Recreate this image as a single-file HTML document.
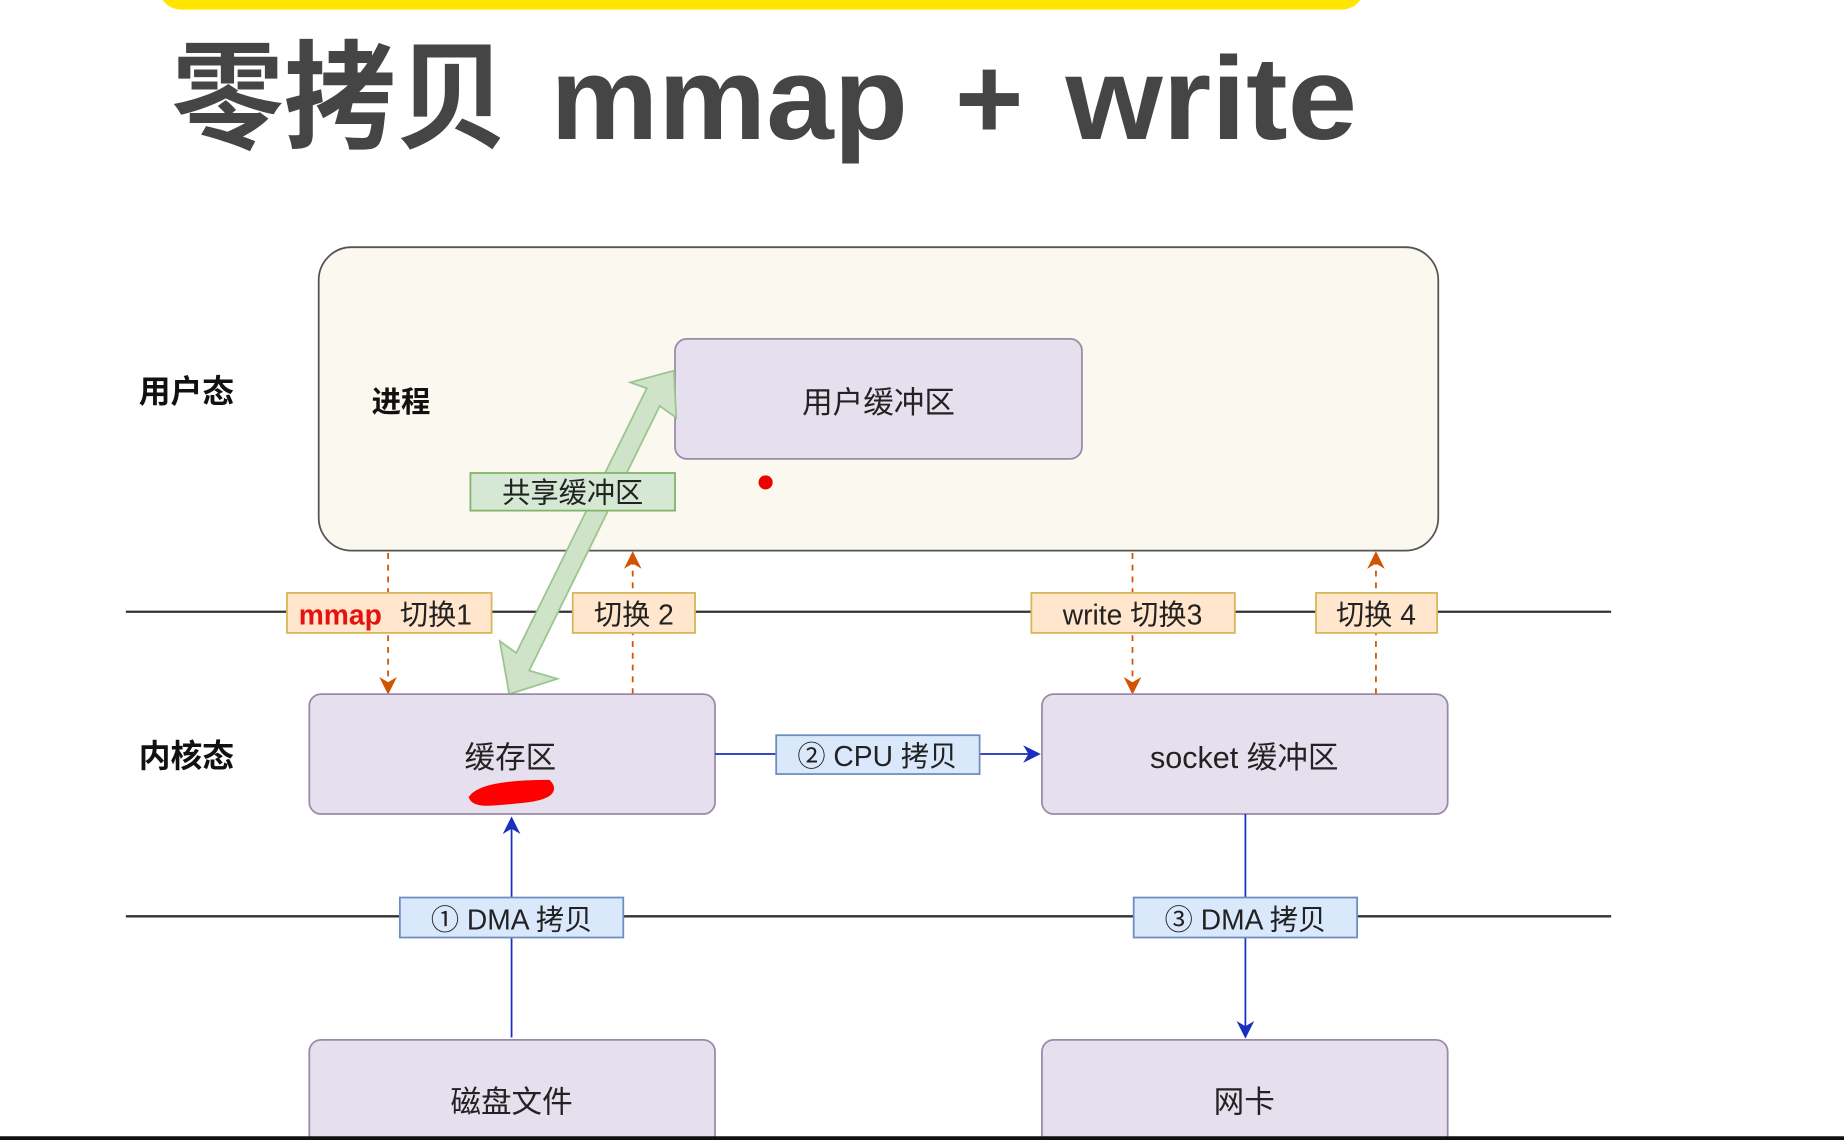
<!DOCTYPE html>
<html><head><meta charset="utf-8"><style>
html,body{margin:0;padding:0;background:#fff;}
svg{display:block;}
text{font-family:"Liberation Sans","Noto Sans CJK SC",sans-serif;}
</style></head><body>
<svg width="1844" height="1140" viewBox="0 0 1568 969" xmlns="http://www.w3.org/2000/svg">
<defs>
<marker id="ao" markerWidth="10" markerHeight="10" refX="5" refY="5" orient="auto"><path d="M0,0 L10,5 L0,10 L3,5z" fill="#d35400"/></marker>
<marker id="ab" markerWidth="10" markerHeight="10" refX="8" refY="5" orient="auto"><path d="M0,0 L10,5 L0,10 L3,5z" fill="#1a2fbf"/></marker>
</defs>
<rect x="0" y="0" width="1568" height="969" fill="#fff"/>
<rect x="135" y="-30" width="1025" height="38" rx="19" fill="#ffe500"/>
<g font-size="100" font-weight="bold" fill="#454545">
<text x="146" y="118" textLength="286" lengthAdjust="spacingAndGlyphs">零拷贝</text>
<text x="468" y="118" textLength="304" lengthAdjust="spacingAndGlyphs">mmap</text>
<text x="812" y="118">+</text>
<text x="906" y="118" textLength="248" lengthAdjust="spacingAndGlyphs">write</text>
</g>

<rect x="271" y="210" width="952" height="258" rx="28" fill="#fbf9ef" stroke="#555" stroke-width="1.5"/>
<text x="118" y="342" font-size="27" font-weight="bold" fill="#111">用户态</text>
<text x="316" y="350" font-size="25" font-weight="bold" fill="#111">进程</text>
<rect x="574" y="288" width="346" height="102" rx="10" fill="#e5dfee" stroke="#9a8aa8" stroke-width="1.5"/>
<text x="747" y="351" font-size="26" text-anchor="middle" fill="#222">用户缓冲区</text>
<circle cx="651" cy="410" r="6" fill="#e00"/>

<line x1="107" y1="520" x2="1370" y2="520" stroke="#333" stroke-width="2"/>
<line x1="107" y1="779" x2="1370" y2="779" stroke="#333" stroke-width="2"/>

<polygon points="573,315 575,355 561,345 450,570 474,577 433,590 425,545 439,555 550,330 536,325" fill="#cfe3c8" stroke="#9cc48f" stroke-width="1.5"/>
<rect x="400" y="402" width="174" height="32" fill="#d5e8d4" stroke="#82b366" stroke-width="1.5"/>
<text x="487" y="427" font-size="24" text-anchor="middle" fill="#222">共享缓冲区</text>

<g stroke="#d35400" stroke-width="1.5" stroke-dasharray="5,5" fill="none">
<line x1="330" y1="470" x2="330" y2="583" marker-end="url(#ao)"/>
<line x1="538" y1="590" x2="538" y2="476" marker-end="url(#ao)"/>
<line x1="963" y1="470" x2="963" y2="583" marker-end="url(#ao)"/>
<line x1="1170" y1="590" x2="1170" y2="476" marker-end="url(#ao)"/>
</g>

<g fill="#ffe6cc" stroke="#d6b656" stroke-width="1.5">
<rect x="244" y="504" width="174" height="34"/>
<rect x="487" y="504" width="104" height="34"/>
<rect x="877" y="504" width="173" height="34"/>
<rect x="1119" y="504" width="103" height="34"/>
</g>
<text x="254" y="531" font-size="24" fill="#e81010" font-weight="bold">mmap</text>
<text x="340" y="531" font-size="24" fill="#222">切换1</text>
<text x="539" y="531" font-size="24" text-anchor="middle" fill="#222">切换 2</text>
<text x="963" y="531" font-size="24" text-anchor="middle" fill="#222">write 切换3</text>
<text x="1170" y="531" font-size="24" text-anchor="middle" fill="#222">切换 4</text>

<text x="118" y="652" font-size="27" font-weight="bold" fill="#111">内核态</text>
<rect x="263" y="590" width="345" height="102" rx="10" fill="#e5dfee" stroke="#9a8aa8" stroke-width="1.5"/>
<text x="434" y="653" font-size="26" text-anchor="middle" fill="#222">缓存区</text>
<path d="M402,678 C410,668 440,666 466,666 C472,672 466,678 440,680 C420,682 405,684 402,678z" fill="#f00" stroke="#f00" stroke-width="6"/>
<rect x="886" y="590" width="345" height="102" rx="10" fill="#e5dfee" stroke="#9a8aa8" stroke-width="1.5"/>
<text x="1058" y="653" font-size="26" text-anchor="middle" fill="#222">socket 缓冲区</text>

<line x1="608" y1="641" x2="882" y2="641" stroke="#1a2fbf" stroke-width="1.5" marker-end="url(#ab)"/>
<rect x="660" y="625" width="173" height="33" fill="#dae8fc" stroke="#6c8ebf" stroke-width="1.5"/>
<text x="746" y="651" font-size="24" text-anchor="middle" fill="#222">② CPU 拷贝</text>

<line x1="435" y1="882" x2="435" y2="697" stroke="#1a2fbf" stroke-width="1.5" marker-end="url(#ab)"/>
<line x1="1059" y1="692" x2="1059" y2="880" stroke="#1a2fbf" stroke-width="1.5" marker-end="url(#ab)"/>
<rect x="340" y="763" width="190" height="34" fill="#dae8fc" stroke="#6c8ebf" stroke-width="1.5"/>
<text x="435" y="790" font-size="24" text-anchor="middle" fill="#222">① DMA 拷贝</text>
<rect x="964" y="763" width="190" height="34" fill="#dae8fc" stroke="#6c8ebf" stroke-width="1.5"/>
<text x="1059" y="790" font-size="24" text-anchor="middle" fill="#222">③ DMA 拷贝</text>

<rect x="263" y="884" width="345" height="110" rx="10" fill="#e5dfee" stroke="#9a8aa8" stroke-width="1.5"/>
<text x="435" y="946" font-size="26" text-anchor="middle" fill="#222">磁盘文件</text>
<rect x="886" y="884" width="345" height="110" rx="10" fill="#e5dfee" stroke="#9a8aa8" stroke-width="1.5"/>
<text x="1058" y="946" font-size="26" text-anchor="middle" fill="#222">网卡</text>
<rect x="0" y="966" width="1568" height="4" fill="#111"/>
</svg>
</body></html>
